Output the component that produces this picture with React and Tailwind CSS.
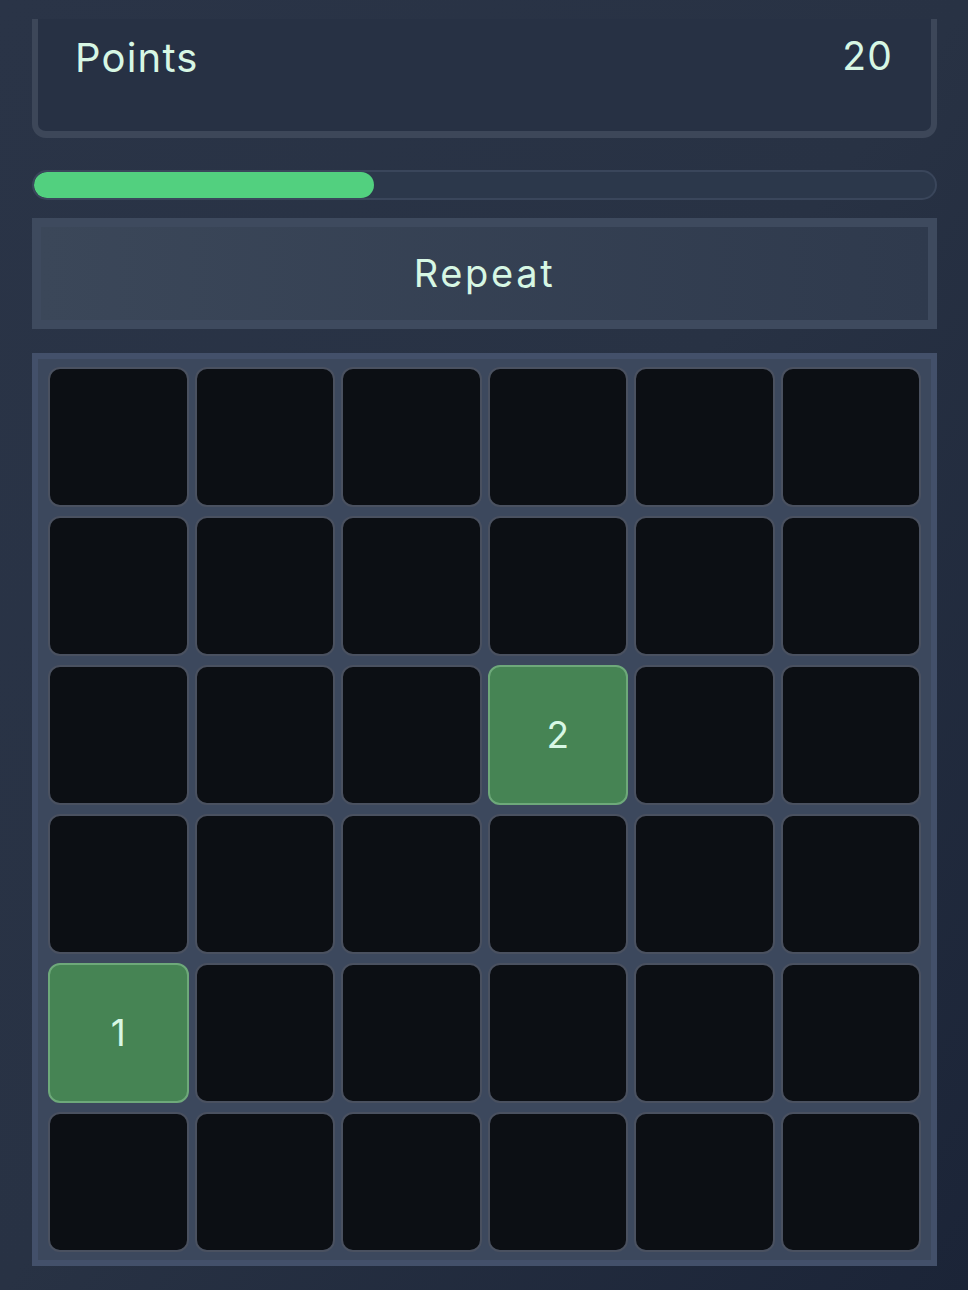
import React from "react";

const ROWS = 6;
const COLS = 6;

// cells that are lit up, keyed by "row-col", value is the step number
const lit = {
  "2-3": 2,
  "4-0": 1,
};

const Cell = ({ value }) => {
  if (value) {
    return (
      <div className="h-[140px] rounded-[12px] border-2 border-[#6ea97a] bg-[#468454] flex items-center justify-center text-[37px] text-[#d7f7e4]">
        {value}
      </div>
    );
  }
  return <div className="h-[140px] rounded-[12px] border-2 border-[#4a5160] bg-[#0c0f14]" />;
};

export default function App() {
  const progress = 37.7;

  const cells = [];
  for (let r = 0; r < ROWS; r++) {
    for (let c = 0; c < COLS; c++) {
      cells.push(<Cell key={`${r}-${c}`} value={lit[`${r}-${c}`]} />);
    }
  }

  return (
    <div
      className="min-h-screen w-full bg-gradient-to-br from-[#2a3447] via-[#283244] to-[#1b2437] pl-[32px] pr-[31px] pb-[23px] text-[#d7f7e4]"
      style={{ fontFamily: "Inter, 'Noto Sans', sans-serif" }}
    >
      {/* score card */}
      <div className="pt-[19px]">
        <div className="h-[119px] rounded-b-[14px] border-x-[6px] border-b-[7px] border-[#3d4759] bg-[#273144] flex items-start justify-between pl-[37px] pr-[38px] pt-[15px]">
          <span className="text-[40px] leading-[48px] tracking-[0.03em]">Points</span>
          <span className="text-[39px] leading-[44px] tracking-[0.03em]">20</span>
        </div>
      </div>

      {/* progress */}
      <div className="mt-[32px] h-[30px] rounded-full border-2 border-[#3a465b] bg-[#2c384b] overflow-hidden">
        <div className="h-full rounded-full bg-[#52d07f]" style={{ width: `${progress}%` }} />
      </div>

      <button className="mt-[18px] w-full h-[111px] border-[9px] border-[#3e4a5e] bg-gradient-to-r from-[#3b4759] to-[#2f3a4d] flex items-center justify-center text-[38px] tracking-[0.07em] text-[#d7f7e4]">
        Repeat
      </button>

      {/* board */}
      <div className="mt-[24px] border-[6px] border-[#43506a] bg-[#3c485d] px-[10px] py-[8px]">
        <div className="grid grid-cols-6 gap-x-[6px] gap-y-[9px]">{cells}</div>
      </div>
    </div>
  );
}
